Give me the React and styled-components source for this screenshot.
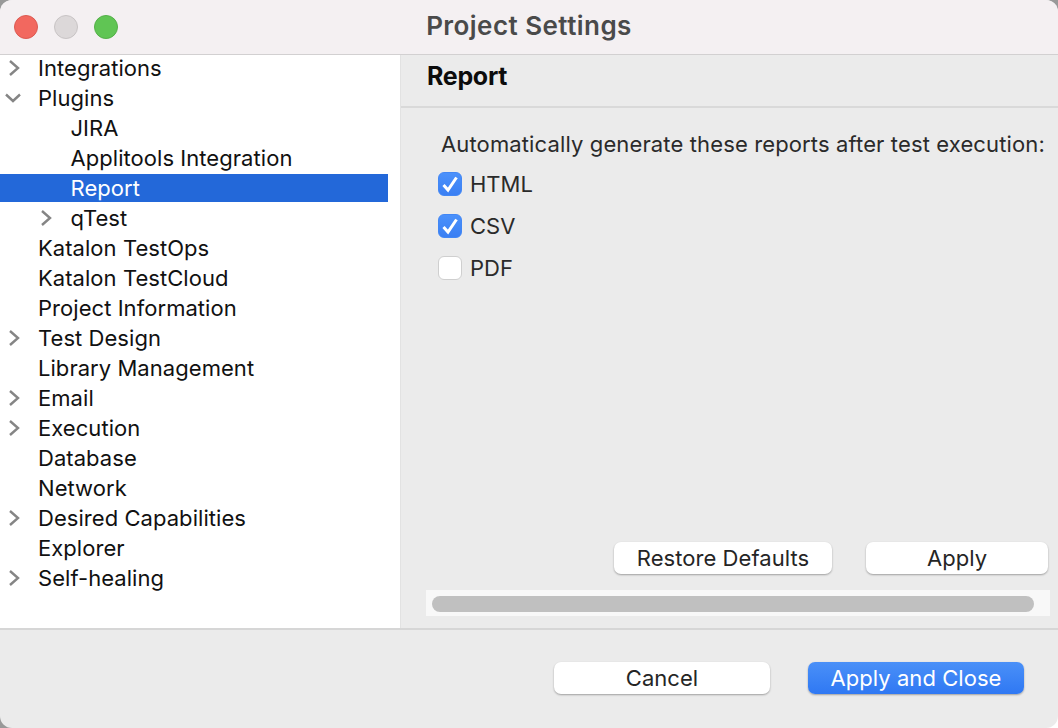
import React from "react";
import styled, { createGlobalStyle } from "styled-components";

const Global = createGlobalStyle`
  html, body { margin: 0; padding: 0; background: #fff; }
  body { font-family: "Inter", "Liberation Sans", sans-serif; }
`;

const Desktop = styled.div`
  width: 1058px;
  height: 728px;
  background: linear-gradient(135deg, #999 98%, #fff 98%);
`;

const Win = styled.div`
  width: 100%;
  height: 100%;
  display: flex;
  flex-direction: column;
  background: #ebebeb;
  border-radius: 12px;
  overflow: hidden;
`;

const TitleBar = styled.div`
  height: 55px;
  flex: none;
  box-sizing: border-box;
  display: flex;
  align-items: center;
  position: relative;
  background: #f4f0f2;
  border-bottom: 1px solid #d2d0d1;
  padding-left: 14px;
  gap: 16px;
`;

const Light = styled.span`
  width: 24px;
  height: 24px;
  box-sizing: border-box;
  border-radius: 50%;
  background: ${(p) => p.$color};
  border: 1px solid ${(p) => p.$edge};
`;

const Title = styled.div`
  position: absolute;
  left: 0;
  right: 0;
  top: 0;
  line-height: 51px;
  text-align: center;
  font-size: 26px;
  font-weight: 600;
  color: #4a4a4a;
  letter-spacing: 0.45px;
`;

const Main = styled.div`
  flex: 1;
  display: flex;
  min-height: 0;
  border-bottom: 2px solid #d6d6d6;
`;

const Tree = styled.div`
  width: 401px;
  flex: none;
  box-sizing: border-box;
  background: #fff;
  border-right: 1px solid #e2e2e2;
  padding-right: 12px;

  & > :first-child {
    margin-top: -1px;
  }
`;

const Row = styled.div`
  height: 28px;
  margin-bottom: 2px;
  display: flex;
  align-items: center;
  position: relative;
  padding-left: ${(p) => (p.$child ? 70.5 : 38)}px;
  font-size: 22px;
  letter-spacing: 0.05px;
  color: ${(p) => (p.$selected ? "#fff" : "#111")};
  background: ${(p) => (p.$selected ? "#2368d9" : "transparent")};
`;

const Arrow = styled.svg`
  position: absolute;
  left: ${(p) => p.$x}px;
  top: 6px;
  width: 16px;
  height: 16px;
  fill: none;
  stroke: #858585;
  stroke-width: 2.4;
`;

const Panel = styled.div`
  flex: 1;
  display: flex;
  flex-direction: column;
  min-width: 0;
`;

const PanelHead = styled.div`
  height: 53px;
  flex: none;
  box-sizing: border-box;
  border-bottom: 2px solid #d9d9d9;
  padding: 0 0 9px 26px;
  display: flex;
  align-items: center;
  font-size: 25px;
  font-weight: 700;
  color: #0c0c0c;
  letter-spacing: -0.3px;
`;

const PanelBody = styled.div`
  flex: 1;
  display: flex;
  flex-direction: column;
  padding: 21px 8px 12px 37px;
`;

const Intro = styled.div`
  font-size: 22px;
  line-height: 30px;
  color: #2a2a2a;
  white-space: nowrap;
  letter-spacing: 0.13px;
  margin: 0 0 4px 3px;
`;

const CheckRow = styled.div`
  display: flex;
  align-items: center;
  gap: 8px;
  height: 42px;
  font-size: 22px;
  color: #2a2a2a;
`;

const Box = styled.span`
  width: 24px;
  height: 24px;
  box-sizing: border-box;
  border-radius: 6px;
  display: flex;
  align-items: center;
  justify-content: center;
  background: ${(p) => (p.$on ? "linear-gradient(#4b91fb, #3a7ff3)" : "#fff")};
  border: 1px solid ${(p) => (p.$on ? "#4287f5" : "#cfcfcf")};
`;

const Spacer = styled.div`
  flex: 1;
`;

const ButtonRow = styled.div`
  display: flex;
  justify-content: flex-end;
  gap: 34px;
  margin: 0 2px 16px 0;
`;

const Button = styled.div`
  height: 32px;
  width: ${(p) => p.$w}px;
  display: flex;
  align-items: center;
  justify-content: center;
  border-radius: 7px;
  font-size: 22px;
  letter-spacing: 0.05px;
  color: ${(p) => (p.$primary ? "#fff" : "#252525")};
  background: ${(p) => (p.$primary ? "linear-gradient(#4a90f8, #2f78f3)" : "#fff")};
  box-shadow: 0 1px 2px rgba(0, 0, 0, 0.32);
`;

const Track = styled.div`
  height: 26px;
  margin-left: -12px;
  box-sizing: border-box;
  padding: 6px 16px 4px 6px;
  background: #f8f8f8;
`;

const Thumb = styled.div`
  height: 16px;
  border-radius: 8px;
  background: #c0c0c0;
`;

const Footer = styled.div`
  height: 98px;
  flex: none;
  display: flex;
  justify-content: flex-end;
  align-items: flex-start;
  gap: 38px;
  padding: 32px 34px 0 0;
  box-sizing: border-box;
`;

const items = [
  { label: "Integrations", arrow: "right" },
  { label: "Plugins", arrow: "down" },
  { label: "JIRA", child: true },
  { label: "Applitools Integration", child: true },
  { label: "Report", child: true, selected: true },
  { label: "qTest", child: true, arrow: "right" },
  { label: "Katalon TestOps" },
  { label: "Katalon TestCloud" },
  { label: "Project Information" },
  { label: "Test Design", arrow: "right" },
  { label: "Library Management" },
  { label: "Email", arrow: "right" },
  { label: "Execution", arrow: "right" },
  { label: "Database" },
  { label: "Network" },
  { label: "Desired Capabilities", arrow: "right" },
  { label: "Explorer" },
  { label: "Self-healing", arrow: "right" },
];

const Chevron = ({ dir, child }) => (
  <Arrow $x={child ? 39 : dir === "down" ? 5 : 7} viewBox="0 0 16 16">
    {dir === "down" ? <path d="M1 4.5 L8 11 L15 4.5" /> : <path d="M3 1 L11 8 L3 15" />}
  </Arrow>
);

const Tick = () => (
  <svg width="22" height="22" viewBox="0 0 22 22" fill="none" stroke="#fff" strokeWidth="3">
    <path d="M4.5 12 L9 17 L17.5 4.5" />
  </svg>
);

const App = () => (
  <Desktop>
    <Global />
    <Win>
      <TitleBar>
        <Light $color="#f2685f" $edge="#dc5a52" />
        <Light $color="#dcd8d9" $edge="#c8c4c5" />
        <Light $color="#60c554" $edge="#54b049" />
        <Title>Project Settings</Title>
      </TitleBar>
      <Main>
        <Tree>
          {items.map((item) => (
            <Row key={item.label} $child={item.child} $selected={item.selected}>
              {item.arrow && <Chevron dir={item.arrow} child={item.child} />}
              {item.label}
            </Row>
          ))}
        </Tree>
        <Panel>
          <PanelHead>Report</PanelHead>
          <PanelBody>
            <Intro>Automatically generate these reports after test execution:</Intro>
            <CheckRow>
              <Box $on>
                <Tick />
              </Box>
              HTML
            </CheckRow>
            <CheckRow>
              <Box $on>
                <Tick />
              </Box>
              CSV
            </CheckRow>
            <CheckRow>
              <Box />
              PDF
            </CheckRow>
            <Spacer />
            <ButtonRow>
              <Button $w={218}>Restore Defaults</Button>
              <Button $w={182}>Apply</Button>
            </ButtonRow>
            <Track>
              <Thumb />
            </Track>
          </PanelBody>
        </Panel>
      </Main>
      <Footer>
        <Button $w={216}>Cancel</Button>
        <Button $w={216} $primary>
          Apply and Close
        </Button>
      </Footer>
    </Win>
  </Desktop>
);

export default App;
